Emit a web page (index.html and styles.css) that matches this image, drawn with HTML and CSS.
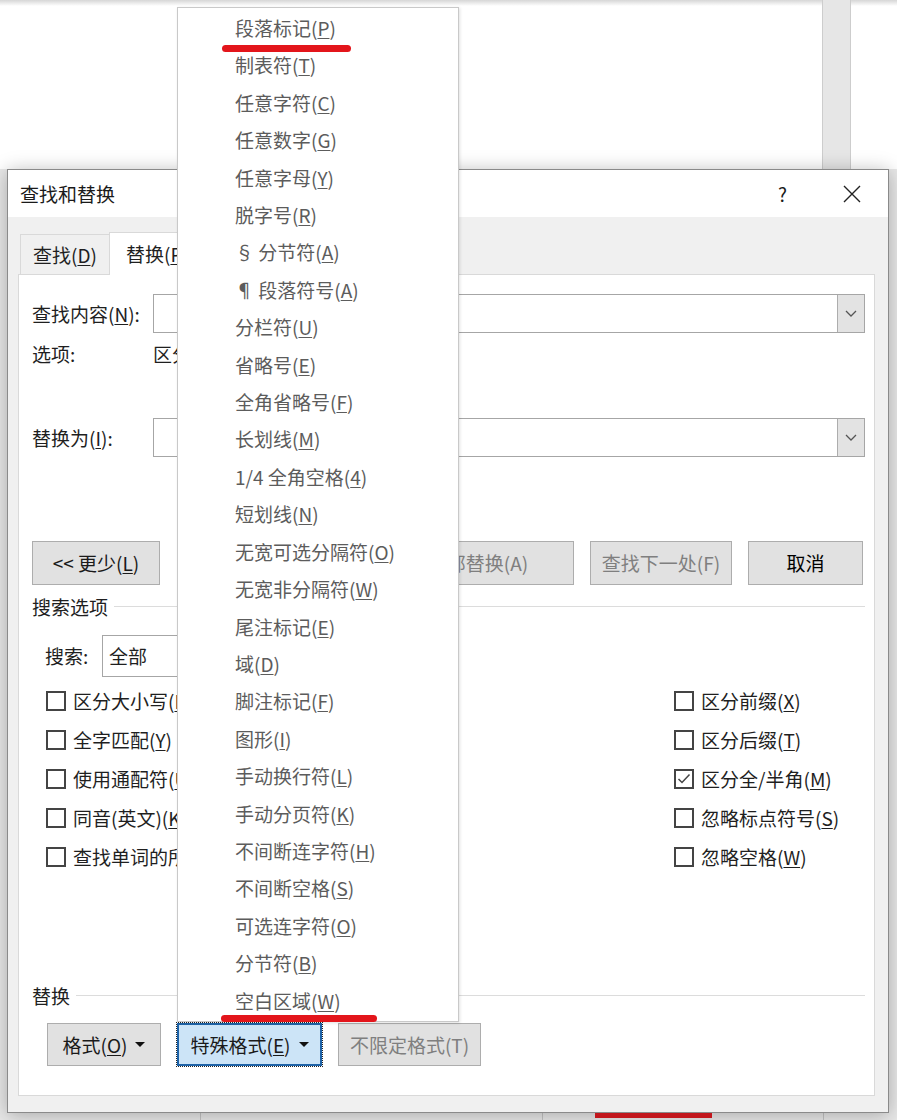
FILE: index.html
```html
<!DOCTYPE html>
<html lang="zh-CN">
<head>
<meta charset="utf-8">
<title>查找和替换</title>
<link rel="stylesheet" href="styles.css">
</head>
<body>
<div class="bg">
  <div class="bg-top"><div class="scroll"></div></div>
  <div class="bg-bottom"></div>
</div>

<div class="dialog">
  <div class="titlebar">
    <span class="title">查找和替换</span>
    <span class="help">?</span>
    <span class="close"><svg width="18" height="18" viewBox="0 0 18 18"><path d="M1 1L17 17M17 1L1 17" stroke="#222" stroke-width="1.4" fill="none"/></svg></span>
  </div>
  <div class="dbody">
    <div class="tabs">
      <div class="tab">查找(<u>D</u>)</div>
      <div class="tab active">替换(<u>P</u>)</div>
    </div>
    <div class="panel">
      <div class="row find">
        <span class="lbl">查找内容(<u>N</u>):</span>
        <div class="combo"><div class="dd"><svg width="12" height="7" viewBox="0 0 12 7"><polyline points="1,1 6,6 11,1" fill="none" stroke="#555" stroke-width="1.3"/></svg></div></div>
      </div>
      <div class="row opts">
        <span class="lbl">选项:</span>
        <span class="clip-opt">区分全/半角</span>
      </div>
      <div class="row repl">
        <span class="lbl">替换为(<u>I</u>):</span>
        <div class="combo"><div class="dd"><svg width="12" height="7" viewBox="0 0 12 7"><polyline points="1,1 6,6 11,1" fill="none" stroke="#555" stroke-width="1.3"/></svg></div></div>
      </div>
      <div class="row actions">
        <div class="btn less">&lt;&lt; 更少(<u>L</u>)</div>
        <div class="spacer"></div>
        <div class="btn all dis">全部替换(A)</div>
        <div class="btn w142 dis">查找下一处(F)</div>
        <div class="btn cancel">取消</div>
      </div>
      <div class="row section">
        <span>搜索选项</span><span class="line"></span>
      </div>
      <div class="row search">
        <span class="slbl">搜索:</span>
        <div class="select">全部</div>
      </div>
      <div class="checks">
        <div class="col left">
          <div class="cb"><span class="box"></span><span>区分大小写(<u>H</u>)</span></div>
          <div class="cb"><span class="box"></span><span>全字匹配(<u>Y</u>)</span></div>
          <div class="cb"><span class="box"></span><span>使用通配符(<u>U</u>)</span></div>
          <div class="cb"><span class="box"></span><span>同音(英文)(<u>K</u>)</span></div>
          <div class="cb"><span class="box"></span><span>查找单词的所有形式(英文)(<u>W</u>)</span></div>
        </div>
        <div class="gap"></div>
        <div class="col right">
          <div class="cb"><span class="box"></span><span>区分前缀(<u>X</u>)</span></div>
          <div class="cb"><span class="box"></span><span>区分后缀(<u>T</u>)</span></div>
          <div class="cb"><span class="box"><svg width="16" height="16" viewBox="0 0 16 16"><polyline points="2.5,8 6,11.5 13.5,3.5" fill="none" stroke="#444" stroke-width="1.5"/></svg></span><span>区分全/半角(<u>M</u>)</span></div>
          <div class="cb"><span class="box"></span><span>忽略标点符号(<u>S</u>)</span></div>
          <div class="cb"><span class="box"></span><span>忽略空格(<u>W</u>)</span></div>
        </div>
      </div>
      <div class="row section repsec">
        <span>替换</span><span class="line"></span>
      </div>
      <div class="row bottom">
        <div class="btn fmt">格式(<u>O</u>)<span class="tri"></span></div>
        <div class="btn special">特殊格式(<u>E</u>)<span class="tri"></span></div>
        <div class="btn nofmt dis">不限定格式(T)</div>
      </div>
    </div>
  </div>
</div>

<div class="menu">
  <div class="mi">段落标记(<u>P</u>)</div>
  <div class="mi">制表符(<u>T</u>)</div>
  <div class="mi">任意字符(<u>C</u>)</div>
  <div class="mi">任意数字(<u>G</u>)</div>
  <div class="mi">任意字母(<u>Y</u>)</div>
  <div class="mi">脱字号(<u>R</u>)</div>
  <div class="mi">§ 分节符(<u>A</u>)</div>
  <div class="mi">¶ 段落符号(<u>A</u>)</div>
  <div class="mi">分栏符(<u>U</u>)</div>
  <div class="mi">省略号(<u>E</u>)</div>
  <div class="mi">全角省略号(<u>F</u>)</div>
  <div class="mi">长划线(<u>M</u>)</div>
  <div class="mi">1/4 全角空格(<u>4</u>)</div>
  <div class="mi">短划线(<u>N</u>)</div>
  <div class="mi">无宽可选分隔符(<u>O</u>)</div>
  <div class="mi">无宽非分隔符(<u>W</u>)</div>
  <div class="mi">尾注标记(<u>E</u>)</div>
  <div class="mi">域(<u>D</u>)</div>
  <div class="mi">脚注标记(<u>F</u>)</div>
  <div class="mi">图形(<u>I</u>)</div>
  <div class="mi">手动换行符(<u>L</u>)</div>
  <div class="mi">手动分页符(<u>K</u>)</div>
  <div class="mi">不间断连字符(<u>H</u>)</div>
  <div class="mi">不间断空格(<u>S</u>)</div>
  <div class="mi">可选连字符(<u>O</u>)</div>
  <div class="mi">分节符(<u>B</u>)</div>
  <div class="mi">空白区域(<u>W</u>)</div>
</div>

<div class="mark m1"></div>
<div class="mark m2"></div>
<div class="mark m3"></div>
</body>
</html>
```

FILE: styles.css
```css
* { box-sizing: border-box; }
html, body { margin: 0; padding: 0; }
body {
  width: 897px;
  height: 1120px;
  overflow: hidden;
  position: relative;
  font-family: "Noto Sans CJK SC", "Microsoft YaHei", sans-serif;
  font-size: 19px;
  color: #1f1f1f;
  background: #fff;
}
u { text-decoration: underline; text-decoration-thickness: 1px; text-underline-offset: 2px; }

/* background application */
.bg { display: flex; flex-direction: column; height: 1120px; }
.bg-top {
  height: 169px;
  display: flex;
  background: linear-gradient(#d6d6d6, #ffffff 6px);
}
.scroll {
  margin-left: 822px;
  width: 29px;
  background: #e6e6e6;
  border-left: 1px solid #cdcdcd;
  border-right: 1px solid #cdcdcd;
}
.bg-bottom {
  flex: 1;
  background-color: #e8e8e8;
  background-image: linear-gradient(to right,
    transparent 200px, #c4c4c4 200px, #c4c4c4 201px, transparent 201px,
    transparent 542px, #c4c4c4 542px, #c4c4c4 543px, transparent 543px,
    transparent 823px, #c4c4c4 823px, #c4c4c4 824px, transparent 824px);
}

/* dialog window */
.dialog {
  position: absolute;
  left: 7px;
  top: 169px;
  width: 882px;
  height: 944px;
  border: 1px solid #8a8a8a;
  background: #f0f0f0;
  box-shadow: 0 2px 18px rgba(0, 0, 0, 0.28);
  display: flex;
  flex-direction: column;
}
.titlebar {
  height: 47px;
  background: #fff;
  display: flex;
  align-items: center;
  padding: 0 27px 0 12px;
  color: #1a1a1a;
}
.help { margin-left: auto; font-size: 19px; }
.close { margin-left: 56px; display: flex; }

.dbody {
  flex: 1;
  display: flex;
  flex-direction: column;
  padding: 15px 13px 16px 10px;
}
.tabs {
  height: 42px;
  display: flex;
  align-items: flex-end;
  padding-left: 2px;
  position: relative;
  z-index: 1;
}
.tab {
  height: 40px;
  border: 1px solid #d9d9d9;
  border-bottom: none;
  padding: 0 12px;
  display: flex;
  align-items: center;
  line-height: 24px;
}
.tab.active {
  height: 43px;
  margin-bottom: -1px;
  margin-left: -1px;
  background: #fff;
  padding: 0 16px;
}
.panel {
  flex: 1;
  background: #fff;
  border: 1px solid #d9d9d9;
  padding: 0 9px 0 13px;
  display: flex;
  flex-direction: column;
}
.row { display: flex; align-items: center; line-height: 24px; }
.lbl { width: 121px; flex: none; }
.find { margin-top: 19px; height: 39px; }
.opts { margin-top: 9px; height: 24px; }
.clip-opt { width: 24px; overflow: hidden; white-space: nowrap; }
.repl { margin-top: 52px; height: 39px; }
.combo {
  flex: 1;
  height: 39px;
  border: 1px solid #a6a6a6;
  display: flex;
  justify-content: flex-end;
  background: #fff;
}
.dd {
  width: 27px;
  background: #e3e3e3;
  border-left: 1px solid #adadad;
  display: flex;
  align-items: center;
  justify-content: center;
}

.actions { margin-top: 84px; height: 44px; gap: 16px; }
.spacer { flex: 1; }
.btn {
  height: 44px;
  background: #e1e1e1;
  border: 1px solid #adadad;
  display: flex;
  align-items: center;
  justify-content: center;
  white-space: nowrap;
  color: #1a1a1a;
}
.btn.dis { color: #7f7f7f; }
.less { width: 128px; }
.w142 { width: 142px; }
.all { width: 192px; }
.cancel { width: 115px; margin-right: 2px; color: #000; }

.section { margin-top: 10px; height: 24px; }
.section .line { flex: 1; height: 1px; background: #dcdcdc; margin-left: 6px; margin-top: -1px; }
.search { margin-top: 16px; height: 42px; padding-left: 13px; }
.slbl { width: 57px; }
.select {
  width: 220px;
  height: 42px;
  border: 1px solid #a6a6a6;
  padding-left: 6px;
  display: flex;
  align-items: center;
}

.checks { margin-top: 4px; display: flex; }
.col { display: flex; flex-direction: column; }
.col.left { margin-left: 14px; width: 131px; overflow: hidden; }
.gap { flex: 1; }
.col.right { width: 191px; }
.cb { height: 39px; display: flex; align-items: center; white-space: nowrap; line-height: 24px; }
.box {
  width: 20px;
  height: 20px;
  border: 2px solid #444;
  margin-right: 7px;
  display: flex;
  align-items: center;
  justify-content: center;
  flex: none;
}

.repsec { margin-top: 108px; }
.bottom { margin-top: 15px; height: 43px; gap: 16px; padding-left: 15px; }
.bottom .btn { height: 43px; }
.fmt { width: 114px; }
.special {
  width: 145px;
  background: #cce4f7;
  border: 2px solid #1e63a8;
  outline: 1px dotted #222;
}
.nofmt { width: 143px; }
.tri {
  width: 0;
  height: 0;
  border-left: 5px solid transparent;
  border-right: 5px solid transparent;
  border-top: 5px solid #111;
  margin-left: 8px;
}

/* popup menu */
.menu {
  position: absolute;
  left: 177px;
  top: 7px;
  width: 282px;
  height: 1015px;
  background: #fff;
  border: 1px solid #c9c9c9;
  box-shadow: 1px 1px 3px rgba(0, 0, 0, 0.12);
  padding-top: 1px;
  z-index: 5;
}
.mi {
  height: 37.42px;
  line-height: 37.42px;
  padding-left: 57px;
  color: #5c5c5c;
  white-space: nowrap;
}

/* red annotations */
.mark {
  position: absolute;
  background: #e3151b;
  border-radius: 4px;
  height: 7px;
  z-index: 10;
}
.m1 { left: 222px; top: 45px; width: 129px; }
.m2 { left: 221px; top: 1015px; width: 156px; }
.m3 { left: 595px; top: 1113px; width: 117px; height: 5px; border-radius: 0; background: #c2161c; }
```
